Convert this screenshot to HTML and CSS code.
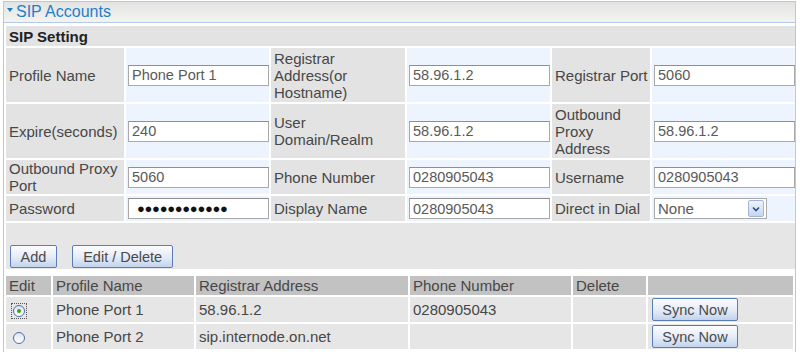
FILE: index.html
```html
<!DOCTYPE html>
<html lang="en">
<head>
    <meta charset="UTF-8">
    <title>SIP Accounts</title>
    <link rel="stylesheet" href="styles.css">
</head>
<body>
    <div class="panel">
        <div class="panel-head">
            <svg class="caret" width="6" height="4" viewBox="0 0 6 4"><path d="M0 0 H6 L3 4 Z" fill="#1e80cb"/></svg>SIP Accounts
        </div>
        <div class="panel-body">
            <table class="setting">
                <colgroup>
                    <col class="c1"><col class="c2"><col class="c3">
                    <col class="c4"><col class="c5"><col class="c6">
                </colgroup>
                <tr>
                    <td class="caption" colspan="6">SIP Setting</td>
                </tr>
                <tr class="tall">
                    <td class="lbl">Profile Name</td>
                    <td class="val"><input type="text" value="Phone Port 1"></td>
                    <td class="lbl">Registrar Address(or Hostname)</td>
                    <td class="val"><input type="text" value="58.96.1.2"></td>
                    <td class="lbl">Registrar Port</td>
                    <td class="val"><input type="text" value="5060"></td>
                </tr>
                <tr class="tall">
                    <td class="lbl">Expire(seconds)</td>
                    <td class="val"><input type="text" value="240"></td>
                    <td class="lbl">User Domain/Realm</td>
                    <td class="val"><input type="text" value="58.96.1.2"></td>
                    <td class="lbl">Outbound Proxy Address</td>
                    <td class="val"><input type="text" value="58.96.1.2"></td>
                </tr>
                <tr class="mid">
                    <td class="lbl">Outbound Proxy Port</td>
                    <td class="val"><input type="text" value="5060"></td>
                    <td class="lbl">Phone Number</td>
                    <td class="val"><input type="text" value="0280905043"></td>
                    <td class="lbl">Username</td>
                    <td class="val"><input type="text" value="0280905043"></td>
                </tr>
                <tr class="short">
                    <td class="lbl">Password</td>
                    <td class="val"><input type="text" class="pw" value="&#9679;&#9679;&#9679;&#9679;&#9679;&#9679;&#9679;&#9679;&#9679;&#9679;&#9679;&#9679;"></td>
                    <td class="lbl">Display Name</td>
                    <td class="val"><input type="text" value="0280905043"></td>
                    <td class="lbl">Direct in Dial</td>
                    <td class="val">
                        <div class="select">
                            <span class="select-text">None</span>
                            <span class="select-arrow">
                                <svg width="8" height="6" viewBox="0 0 8 6"><path d="M1 1.5 L4 4.5 L7 1.5" fill="none" stroke="#2b4f86" stroke-width="1.6"/></svg>
                            </span>
                        </div>
                    </td>
                </tr>
                <tr>
                    <td class="actions" colspan="6">
                        <button class="btn btn-add">Add</button>
                        <button class="btn btn-edit">Edit / Delete</button>
                    </td>
                </tr>
            </table>

            <table class="list">
                <tr class="list-head">
                    <td class="l1">Edit</td>
                    <td class="l2">Profile Name</td>
                    <td class="l3">Registrar Address</td>
                    <td class="l4">Phone Number</td>
                    <td class="l5">Delete</td>
                    <td class="l6"></td>
                </tr>
                <tr class="list-row">
                    <td><span class="focus"><span class="radio checked"></span></span></td>
                    <td>Phone Port 1</td>
                    <td>58.96.1.2</td>
                    <td>0280905043</td>
                    <td></td>
                    <td><button class="btn btn-sync">Sync Now</button></td>
                </tr>
                <tr class="list-row">
                    <td><span class="focus blank"><span class="radio"></span></span></td>
                    <td>Phone Port 2</td>
                    <td>sip.internode.on.net</td>
                    <td></td>
                    <td></td>
                    <td><button class="btn btn-sync">Sync Now</button></td>
                </tr>
            </table>
        </div>
    </div>
</body>
</html>
```

FILE: styles.css
```css
:root {
    --frame-color: #b3c9e9;
    --label-bg: #e3e3e3;
    --value-bg: #edf4fd;
    --text-color: #474747;
    --input-text: #5a5a5a;
}

body {
    margin: 0;
    background: #ffffff;
    font-family: 'Liberation Sans', Arial, sans-serif;
    font-size: 15px;
    color: var(--text-color);
}

.panel {
    box-sizing: border-box;
    width: 793px;
    height: 360px;
    margin: 1px 0 0 3px;
    border: 1px solid var(--frame-color);
    border-bottom: none;
}

.panel-head {
    height: 20px;
    line-height: 20px;
    padding-left: 3px;
    background: linear-gradient(#e3e3e3, #f3f3ef);
    border-bottom: 1px solid var(--frame-color);
    color: #1e80cb;
    font-size: 16px;
}

.caret {
    vertical-align: 5px;
    margin-right: 3px;
}

.panel-body {
    padding-top: 1px;
}

table {
    border-spacing: 2px;
    width: 791px;
    table-layout: fixed;
}

td {
    padding: 0;
}

.caption {
    height: 20px;
    background: var(--label-bg);
    font-weight: bold;
    padding-left: 3px;
    color: #222;
}

.lbl {
    background: var(--label-bg);
    padding: 0 0 0 3px;
    line-height: 17px;
}

.val {
    background: var(--value-bg);
    padding-left: 2px;
}

.c1 { width: 118px; }
.c2 { width: 143px; }
.c3 { width: 134px; }
.c4 { width: 143px; }
.c5 { width: 98px; }
.c6 { width: 143px; }

.tall td { height: 54px; }
.mid td { height: 34px; }
.short td { height: 25px; }

input {
    box-sizing: border-box;
    width: 141px;
    height: 21px;
    margin: 0;
    padding: 0 3px;
    border: 1px solid #a9a9a9;
    border-top-color: #8f8f8f;
    font-family: 'Liberation Sans', Arial, sans-serif;
    font-size: 14.5px;
    color: var(--input-text);
    background: #fff;
}

.pw {
    color: #111;
    font-size: 13px;
    letter-spacing: -0.3px;
    padding-left: 8px;
}

.select {
    box-sizing: border-box;
    display: flex;
    align-items: center;
    width: 113px;
    height: 21px;
    border: 1px solid #a9a9a9;
    background: #fff;
    color: var(--input-text);
}

.select-text {
    flex: 1;
    padding-left: 3px;
}

.select-arrow {
    display: flex;
    align-items: center;
    justify-content: center;
    width: 14px;
    height: 15px;
    margin-right: 2px;
    border: 1px solid #9fb6d8;
    border-radius: 2px;
    background: linear-gradient(#eef3fb, #c6d6ef);
}

.actions {
    height: 45px;
    background: #e6e6e6;
    vertical-align: bottom;
    padding: 0 0 1px 4px;
}

.btn {
    height: 23px;
    margin: 0;
    padding: 0;
    border: 1px solid #5b7db5;
    border-radius: 2px;
    background: linear-gradient(#fbfcfe, #e4ebf7 55%, #c3d3ec);
    font-family: 'Liberation Sans', Arial, sans-serif;
    font-size: 14.5px;
    color: #4a4a4a;
}

.btn-add { width: 47px; }
.btn-edit { width: 101px; margin-left: 11px; }
.btn-sync { width: 86px; margin-left: 1px; }

.list {
    margin-top: 3px;
}

.l1 { width: 42px; }
.l2 { width: 138px; }
.l3 { width: 209px; }
.l4 { width: 158px; }
.l5 { width: 70px; }

.list td {
    padding-left: 3px;
    white-space: nowrap;
}

.list-head td {
    height: 19px;
    background: #c2c2c2;
    color: #474747;
}

.list-row td {
    height: 25px;
    background: #e6e6e6;
}

.focus {
    display: inline-flex;
    align-items: center;
    justify-content: center;
    width: 14px;
    height: 14px;
    margin: 0 0 0 3px;
    outline: 1px dotted #555;
    vertical-align: middle;
}

.focus.blank {
    outline: none;
}

.radio {
    box-sizing: border-box;
    display: flex;
    align-items: center;
    justify-content: center;
    width: 12px;
    height: 12px;
    border: 1px solid #4d6fa3;
    border-radius: 50%;
    background: linear-gradient(#dfe5ee, #ffffff);
}

.radio.checked::after {
    content: "";
    width: 4px;
    height: 4px;
    border-radius: 50%;
    background: #2fa52a;
}
```
